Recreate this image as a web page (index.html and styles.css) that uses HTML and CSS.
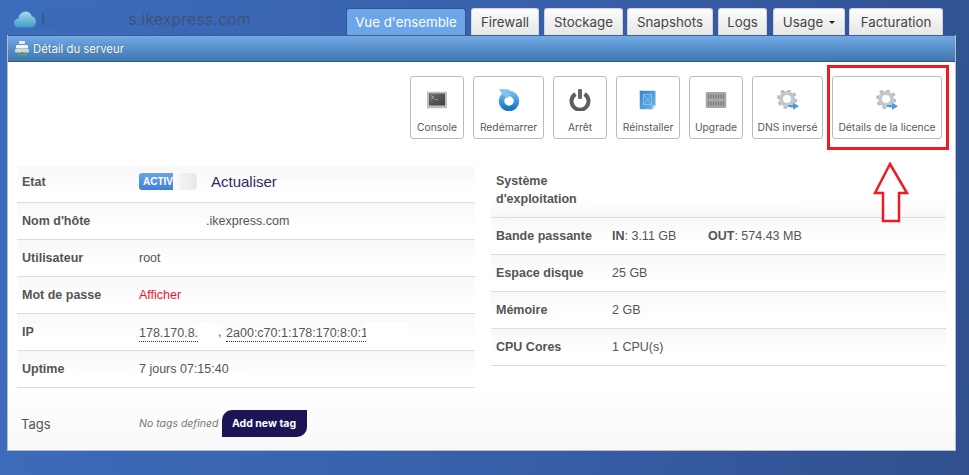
FILE: index.html
```html
<!DOCTYPE html>
<html lang="fr">
<head>
<meta charset="utf-8">
<title>Détail du serveur</title>
<link rel="stylesheet" href="styles.css">
</head>
<body>
<div class="topbar">
  <div class="brand">
    <svg class="cloud" width="22" height="17" viewBox="0 0 22 17"><defs><linearGradient id="cl" x1="0" y1="0" x2="0" y2="1"><stop offset="0" stop-color="#a9d8ee"/><stop offset="1" stop-color="#3f9cc6"/></linearGradient></defs><path fill="url(#cl)" d="M5 16.500C2 16.500 0 14.500 0 12s2-4.300 4.300-4.400C5 3.500 8 .5 11.500.5c3 0 5.500 2 6.300 4.800 2.400.4 4.200 2.600 4.200 5.300 0 3.300-2.400 5.900-5.500 5.900z"/></svg>
    <span class="brand-h">h</span><span class="brand-mask"></span><span>s.ikexpress.com</span>
  </div>
  <nav class="tabs">
    <a class="tab tab-active w120">Vue d'ensemble</a>
    <a class="tab w68">Firewall</a>
    <a class="tab w79">Stockage</a>
    <a class="tab w86">Snapshots</a>
    <a class="tab w49">Logs</a>
    <a class="tab w72">Usage <i class="caret"></i></a>
    <a class="tab w94">Facturation</a>
  </nav>
</div>
<section class="panel">
  <header class="panel-head">
    <svg width="14" height="15" viewBox="0 0 14 15"><rect x="4" y="0" width="6" height="3" rx="1" fill="#eee"/><rect x="1" y="4" width="12" height="3.500" rx="1" fill="#f4f4f4"/><rect x="0" y="8" width="14" height="3.500" rx="1" fill="#d4d4d4"/><rect x="6" y="11" width="2" height="2" fill="#777"/><rect x="2" y="13" width="10" height="1.500" fill="#45b04a"/></svg>
    <span>Détail du serveur</span>
  </header>
  <div class="panel-body">
    <div class="actions">
      <a class="act w54">
        <svg width="20" height="17" viewBox="0 0 20 17"><defs><linearGradient id="scr" x1="0" y1="0" x2="1" y2="1"><stop offset="0" stop-color="#6a6c6e"/><stop offset="1" stop-color="#3f4144"/></linearGradient></defs><rect width="20" height="17" fill="#bcbeba"/><rect x="2" y="2" width="16" height="12" fill="url(#scr)"/><path d="M4 4l3 2-3 2" fill="none" stroke="#bbb" stroke-width=".8"/><rect x="8" y="7.500" width="3" height=".8" fill="#aaa"/></svg>
        <span>Console</span>
      </a>
      <a class="act w71">
        <svg width="22" height="22" viewBox="0 0 22 22"><defs><linearGradient id="rb" x1="0" y1="0" x2="0" y2="1"><stop offset="0" stop-color="#6db7ea"/><stop offset="1" stop-color="#1877c9"/></linearGradient></defs><circle cx="11" cy="12" r="7.500" fill="none" stroke="url(#rb)" stroke-width="5.500"/><path d="M1 0l11 .5-2 2.500 3 2-4 4.500L5 6z" fill="#83c4ef"/></svg>
        <span>Redémarrer</span>
      </a>
      <a class="act w54">
        <svg width="23" height="22" viewBox="0 0 23 22"><path d="M7 5a8.500 8.500 0 1 0 9 0" fill="none" stroke="#5e5e5e" stroke-width="4"/><rect x="9.500" y="0" width="4" height="10" rx="1" fill="#656565"/></svg>
        <span>Arrêt</span>
      </a>
      <a class="act w64">
        <svg width="17" height="19" viewBox="0 0 17 19"><defs><linearGradient id="doc" x1="0" y1="0" x2="1" y2="1"><stop offset="0" stop-color="#2f86d0"/><stop offset="1" stop-color="#74b6e6"/></linearGradient></defs><path d="M0 0h16v15l-3 4H0z" fill="url(#doc)"/><path d="M13 19l3-4h-3z" fill="#d5e6f2"/><path d="M4 4h8v10H4zM4 4l8 10M12 4l-8 10" fill="none" stroke="#9ecbea" stroke-width=".7"/></svg>
        <span>Réinstaller</span>
      </a>
      <a class="act w54">
        <svg width="21" height="16" viewBox="0 0 21 16"><rect width="21" height="16" rx="1" fill="#a8a8a8"/><path d="M3 2.500v4M5.500 2.500v4M8 2.500v4M10.500 2.500v4M13 2.500v4M15.500 2.500v4M18 2.500v4M3 9.500v4M5.500 9.500v4M8 9.500v4M10.500 9.500v4M13 9.500v4M15.500 9.500v4M18 9.500v4" stroke="#767676" stroke-width="1.200"/></svg>
        <span>Upgrade</span>
      </a>
      <a class="act w71">
        <svg width="22" height="20" viewBox="0 0 22 20"><circle cx="10" cy="9" r="6" fill="none" stroke="#c4c8ca" stroke-width="4"/><circle cx="10" cy="9" r="8.800" fill="none" stroke="#b6babc" stroke-width="2.400" stroke-dasharray="3.500 3.410"/><path d="M11 15h5v-2.500l6 3.700-6 3.500V17h-5z" fill="#4a9be0"/></svg>
        <span>DNS inversé</span>
      </a>
      <a class="act w110">
        <svg width="22" height="20" viewBox="0 0 22 20"><circle cx="10" cy="9" r="6" fill="none" stroke="#c4c8ca" stroke-width="4"/><circle cx="10" cy="9" r="8.800" fill="none" stroke="#b6babc" stroke-width="2.400" stroke-dasharray="3.500 3.410"/><path d="M11 15h5v-2.500l6 3.700-6 3.500V17h-5z" fill="#4a9be0"/></svg>
        <span>Détails de la licence</span>
      </a>
    </div>
    <div class="columns">
      <div class="col-left">
        <div class="row row-first">
          <div class="label">Etat</div>
          <div class="value status">
            <span class="switch"><span class="switch-on">ACTIV</span><span class="switch-off"></span></span>
            <a class="refresh">Actualiser</a>
          </div>
        </div>
        <div class="row">
          <div class="label">Nom d'hôte</div>
          <div class="value"><span class="host-mask"></span>.ikexpress.com</div>
        </div>
        <div class="row">
          <div class="label">Utilisateur</div>
          <div class="value">root</div>
        </div>
        <div class="row">
          <div class="label">Mot de passe</div>
          <div class="value"><a class="show">Afficher</a></div>
        </div>
        <div class="row">
          <div class="label">IP</div>
          <div class="value ip"><span class="dotted">178.170.8.</span><span class="mask-a"></span><span class="comma">,</span><span class="dotted">2a00:c70:1:178:170:8:0:1</span><span class="mask-b"></span></div>
        </div>
        <div class="row">
          <div class="label">Uptime</div>
          <div class="value">7 jours 07:15:40</div>
        </div>
        <div class="tags">
          <div class="label label-tags">Tags</div>
          <div class="tags-value"><em>No tags defined</em><a class="add-tag">Add new tag</a></div>
        </div>
      </div>
      <div class="col-right">
        <div class="row row-tall">
          <div class="label">Système d'exploitation</div>
          <div class="value os-value"><span class="os-mask"></span></div>
        </div>
        <div class="row">
          <div class="label">Bande passante</div>
          <div class="value"><span class="bw"><b>IN</b>: 3.11 GB</span><span><b>OUT</b>: 574.43 MB</span></div>
        </div>
        <div class="row">
          <div class="label">Espace disque</div>
          <div class="value">25 GB</div>
        </div>
        <div class="row">
          <div class="label">Mémoire</div>
          <div class="value">2 GB</div>
        </div>
        <div class="row">
          <div class="label">CPU Cores</div>
          <div class="value">1 CPU(s)</div>
        </div>
      </div>
    </div>
  </div>
</section>
<div class="callout-box"></div>
<svg class="callout-arrow" width="38" height="61" viewBox="0 0 38 61"><path d="M17 2L34 31h-8v28H10V31H2z" fill="#fff" stroke="#ed1c24" stroke-width="2.500"/></svg>
</body>
</html>
```
FILE: styles.css
```css
* { box-sizing: border-box; }
html, body { margin: 0; height: 100%; }
body {
  width: 969px;
  height: 475px;
  overflow: hidden;
  position: relative;
  background: linear-gradient(100deg, #3c6dbd 0%, #385fa9 55%, #30508f 100%);
  font-family: "Liberation Sans", Arial, sans-serif;
  font-size: 12.500px;
  color: #555;
}
.topbar {
  height: 35px;
  padding: 8px 0 0 14px;
  display: flex;
  justify-content: space-between;
}
.brand {
  display: flex;
  align-items: center;
  height: 22px;
  font-family: Inter, sans-serif;
  font-size: 16px;
  color: #3d5479;
}
.cloud { margin-right: 5px; }
.brand-h { flex: none; }
.brand-mask { width: 83px; height: 23px; margin-top: -1px; margin-left: -5px; background: #3a6ab6; position: relative; }
.tabs { display: flex; gap: 5px; padding-right: 26px; position: relative; z-index: 1; }
.tab {
  height: 27px;
  display: flex;
  align-items: center;
  justify-content: center;
  font-family: Inter, sans-serif;
  font-size: 13.300px;
  color: #444;
  background: linear-gradient(#fdfdfd, #e6e6e6);
  border: 1px solid #cfd4dc;
  border-bottom: 0;
  border-radius: 3px 3px 0 0;
  white-space: nowrap;
}
.tab-active {
  color: #fff;
  background: #6ca6e9;
  border-color: #2f5687;
}
.w120 { width: 120px; }
.w68 { width: 68px; }
.w79 { width: 79px; margin-right: -1px; }
.w86 { width: 86px; }
.w49 { width: 49px; margin-right: 1px; }
.w72 { width: 72px; margin-right: -1px; }
.w94 { width: 94px; }
.caret {
  display: inline-block;
  margin-left: 6px;
  border-left: 3.500px solid transparent;
  border-right: 3.500px solid transparent;
  border-top: 3.500px solid #222;
}
.panel {
  margin-left: 7px;
  width: 949px;
  height: 416px;
  background: linear-gradient(#fff 85%, #f8f8f8);
  border: 1px solid #b9bdc4;
  border-top: 0;
}
.panel-head {
  height: 27px;
  display: flex;
  align-items: center;
  gap: 4px;
  padding-left: 7px;
  color: #fff;
  font-family: Inter, sans-serif;
  font-size: 11.300px;
  background: linear-gradient(#72aae6, #3f76af);
  border-bottom: 1px solid #2d5b88;
  border-top: 1px solid #3d6088;
  text-shadow: 0 0 1px rgba(30, 50, 80, .6);
}
.panel-body { padding: 14px 8px 0 9px; }
.actions { display: flex; justify-content: flex-end; gap: 9px; padding-right: 5px; }
.act {
  height: 63px;
  padding-bottom: 5px;
  display: flex;
  flex-direction: column;
  align-items: center;
  justify-content: flex-end;
  position: relative;
  font-family: Inter, sans-serif;
  font-size: 10.300px;
  color: #5a5a5a;
  background: #fff;
  border: 1px solid #bbb;
  border-radius: 3px;
  white-space: nowrap;
}
.act svg { position: absolute; left: 50%; top: 23px; transform: translate(-50%, -50%); }
.w54 { width: 54px; }
.w71 { width: 71px; }
.w64 { width: 64px; }
.w110 { width: 110px; }
.columns {
  display: grid;
  grid-template-columns: 458px 455px;
  column-gap: 16px;
  margin-top: 27px;
}
.row {
  display: flex;
  align-items: center;
  height: 37px;
  padding-left: 5px;
  border-bottom: 1px solid #ddd;
  background: linear-gradient(#f8f8f8, #fff 70%);
}
.row-first { padding-bottom: 5px; }
.row-tall { height: 52px; padding-bottom: 4px; background: linear-gradient(#fff 60%, #f8f8f8); }
.label { width: 117px; flex: none; font-weight: bold; color: #555; line-height: 18px; }
.col-right .label { width: 116px; }
.row-tall .label { padding-right: 16px; }
.value { display: flex; align-items: center; color: #555; }
.status { gap: 14px; }
.switch {
  display: flex;
  width: 58px;
  height: 17px;
  border-radius: 3px;
  overflow: hidden;
}
.switch-on {
  width: 34px;
  padding-left: 4px;
  line-height: 17px;
  color: #fff;
  font-size: 10px;
  font-weight: bold;
  overflow: hidden;
  background: linear-gradient(#6ca3e6, #3f80d4);
}
.switch-off { flex: 1; background: linear-gradient(90deg, #fff, #f0f0f0 40%, #e9e9e9); }
.refresh { font-size: 15px; color: #2b2a66; }
.host-mask { width: 67px; height: 14px; }
.show { color: #f0142d; }
.dotted { border-bottom: 1px dotted #333; line-height: 16px; margin-top: 2px; }
.comma { width: 8px; }
.mask-a { width: 20px; height: 22px; background: #fff; margin-top: 3px; }
.mask-b { width: 42px; height: 26px; background: #fff; margin-top: 6px; margin-left: -2px; }
.os-value { align-self: flex-start; margin-top: 5px; }
.os-mask { display: block; width: 201px; height: 32px; margin-left: -15px; background: #fff; }
.bw { width: 96px; }
.tags { display: flex; align-items: center; height: 27px; margin-top: 22px; padding-left: 4px; }
.label-tags { width: 118px; font-weight: normal; font-family: Inter, sans-serif; font-size: 13px; }
.tags-value { display: flex; align-items: center; gap: 3px; }
.tags-value em {
  font-family: Inter, sans-serif;
  font-size: 10.500px;
  color: #777;
  white-space: nowrap;
}
.add-tag {
  width: 85px;
  height: 27px;
  display: flex;
  align-items: center;
  justify-content: center;
  font-family: Inter, sans-serif;
  font-size: 10.500px;
  font-weight: 700;
  color: #fff;
  background: #1b1556;
  border-radius: 10px 0 10px 0;
}
.callout-box {
  position: absolute;
  left: 827px;
  top: 65px;
  width: 122px;
  height: 85px;
  border: 3px solid #ed1c24;
}
.callout-arrow { position: absolute; left: 873px; top: 162px; }
```
